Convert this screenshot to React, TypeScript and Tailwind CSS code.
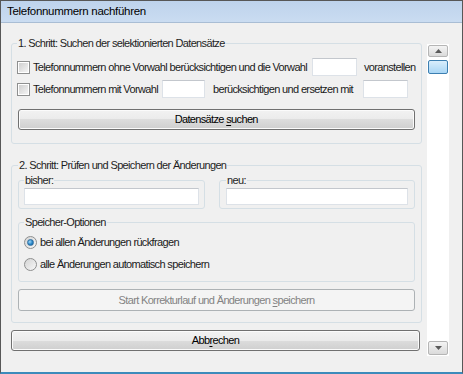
import React from 'react';

const font = { fontFamily: '"Liberation Sans", Arial, sans-serif' };

const btn =
  'flex items-center justify-center rounded-[3px] border border-[#707070] bg-[linear-gradient(to_bottom,#f2f2f2_0%,#ebebeb_50%,#dddddd_50%,#cfcfcf_100%)] shadow-[inset_0_0_0_1px_#fbfbfb] text-black';
const btnOff =
  'flex items-center justify-center rounded-[3px] border border-[#adb2b5] bg-[#f4f4f4] text-[#838383]';
const input = 'shrink-0 bg-white border border-[#dde2e8] border-t-[#c3c7cd]';

const CheckBox: React.FC = () => (
  <span className="w-[13px] h-[13px] shrink-0 border border-[#8e8f8f] bg-white p-[1px]">
    <span className="block w-full h-full bg-[linear-gradient(135deg,#cfcfcf,#f4f4f4)]" />
  </span>
);

const Radio: React.FC<{ checked?: boolean }> = ({ checked }) => (
  <span className="w-[13px] h-[13px] shrink-0 rounded-full border border-[#8e8f8f] bg-[linear-gradient(135deg,#d4d4d4,#f7f7f7)] flex items-center justify-center">
    {checked && (
      <span className="w-[7px] h-[7px] rounded-full bg-[radial-gradient(circle_at_35%_35%,#9fd6f8,#2a87c8_55%,#0f5a98)] border border-[#2e6ea0]" />
    )}
  </span>
);

const Legend: React.FC<{ children: React.ReactNode }> = ({ children }) => (
  <legend className="px-[1px] leading-[13px] text-[#1e1e1e] whitespace-nowrap">{children}</legend>
);

export default function App() {
  return (
    <div
      style={font}
      className="w-[463px] h-[374px] flex flex-col bg-[#f0f0f0] border border-[#575757] border-b-[2px] border-b-[#3c8bbb] text-[11px] tracking-[-0.65px] text-[#1a1a1a] overflow-hidden whitespace-nowrap"
    >
      {/* Title bar */}
      <div className="h-[22px] shrink-0 flex items-center pl-[6px] bg-[linear-gradient(to_bottom,#bed3ec,#cadcf1)] border-b border-[#a9bdd4] text-[11.5px] tracking-[-0.3px] text-black">
        Telefonnummern nachführen
      </div>

      <div className="flex flex-1">
        {/* Main column */}
        <div className="w-[409px] ml-[10px] flex flex-col">
          {/* Step 1 */}
          <fieldset className="mt-[14px] border border-[#d5dfe5] rounded-[3px] px-[5px] pt-[8px] pb-[13px]">
            <Legend>1. Schritt: Suchen der selektionierten Datensätze</Legend>
            <div className="flex flex-col gap-[4px]">
              <div className="h-[18px] flex items-center">
                <CheckBox />
                <span className="ml-[3px] w-[279px] shrink-0">
                  Telefonnummern ohne Vorwahl berücksichtigen und die Vorwahl
                </span>
                <span className={`${input} w-[45px] h-[18px]`} />
                <span className="ml-[7px]">voranstellen</span>
              </div>
              <div className="h-[18px] flex items-center">
                <CheckBox />
                <span className="ml-[3px] w-[129px] shrink-0">Telefonnummern mit Vorwahl</span>
                <span className={`${input} w-[43px] h-[18px]`} />
                <span className="ml-[8px] w-[150px] shrink-0">berücksichtigen und ersetzen mit</span>
                <span className={`${input} w-[45px] h-[18px]`} />
              </div>
            </div>
            <div className={`${btn} mt-[11px] mx-[1px] h-[21px]`}>
              <span>
                Datensätze <span className="underline underline-offset-2">s</span>uchen
              </span>
            </div>
          </fieldset>

          {/* Step 2 */}
          <fieldset className="mt-[15px] border border-[#d5dfe5] rounded-[3px] px-[6px] pt-[2px] pb-[11px]">
            <Legend>2. Schritt: Prüfen und Speichern der Änderungen</Legend>
            <div className="flex gap-[14px]">
              <fieldset className="w-[187px] border border-[#d5dfe5] rounded-[3px] px-[5px] pt-[1px] pb-[3px]">
                <Legend>bisher:</Legend>
                <div className={`${input} h-[17px]`} />
              </fieldset>
              <fieldset className="w-[196px] border border-[#d5dfe5] rounded-[3px] px-[6px] pt-[1px] pb-[3px]">
                <Legend>neu:</Legend>
                <div className={`${input} h-[17px]`} />
              </fieldset>
            </div>

            <fieldset className="mt-[7px] border border-[#d5dfe5] rounded-[3px] px-[5px] pt-[5px] pb-[9px]">
              <Legend>Speicher-Optionen</Legend>
              <div className="flex flex-col gap-[6px]">
                <div className="h-[16px] flex items-center gap-[3px]">
                  <Radio checked />
                  <span>bei allen Änderungen rückfragen</span>
                </div>
                <div className="h-[16px] flex items-center gap-[3px]">
                  <Radio />
                  <span>alle Änderungen automatisch speichern</span>
                </div>
              </div>
            </fieldset>

            <div className={`${btnOff} mt-[7px] h-[22px]`}>
              <span>
                Start Korrekturlauf und Änderungen <span className="underline underline-offset-2">s</span>peichern
              </span>
            </div>
          </fieldset>

          <div className={`${btn} mt-[7px] h-[21px]`}>
            <span>
              Abb<span className="underline underline-offset-2">r</span>echen
            </span>
          </div>
        </div>

        {/* Scrollbar */}
        <div className="ml-[7px] mt-[21px] mb-[16px] w-[22px] bg-white flex flex-col justify-between items-center py-[1px]">
          <div className="flex flex-col gap-[3px]">
            <div className="w-[20px] h-[12px] rounded-[2px] border border-[#b5b5b5] bg-[linear-gradient(to_bottom,#f4f4f4,#dadada)] flex items-center justify-center">
              <svg width="7" height="4" viewBox="0 0 7 4">
                <path d="M0 4 L3.5 0 L7 4 Z" fill="#5a5a5a" />
              </svg>
            </div>
            <div className="w-[20px] h-[14px] rounded-[2px] border border-[#3c7fb1] bg-[linear-gradient(to_bottom,#d9eefc,#a9d6f5)]" />
          </div>
          <div className="w-[20px] h-[14px] rounded-[2px] border border-[#b5b5b5] bg-[linear-gradient(to_bottom,#f4f4f4,#dadada)] flex items-center justify-center">
            <svg width="7" height="4" viewBox="0 0 7 4">
              <path d="M0 0 L7 0 L3.5 4 Z" fill="#5a5a5a" />
            </svg>
          </div>
        </div>
      </div>
    </div>
  );
}
